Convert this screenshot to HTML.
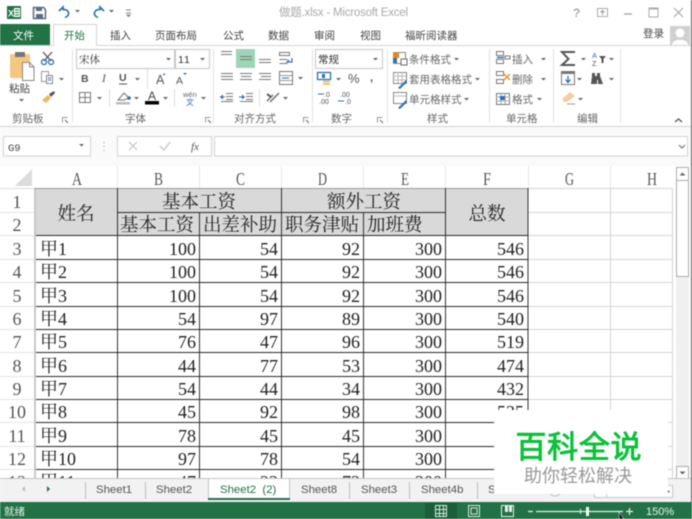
<!DOCTYPE html>
<html><head><meta charset="utf-8"><style>
html,body{margin:0;padding:0;background:#fff;width:692px;height:519px;overflow:hidden}
svg{display:block;filter:blur(.4px)}
.u{font:10.5px "Liberation Sans","Noto Sans CJK SC",sans-serif;fill:#444}
.g{font:10.5px "Liberation Sans","Noto Sans CJK SC",sans-serif;fill:#666}
.c{font:18px "Liberation Serif","Noto Serif CJK SC",serif;fill:#222}
.h{font:18px "Liberation Serif","Noto Serif CJK SC",serif;fill:#555}
.r{text-anchor:end}.m{text-anchor:middle}
.s{font:11.4px "Liberation Sans",sans-serif;fill:#555}
.st{fill:none;stroke:#666;stroke-width:1}
</style></head><body>
<svg xmlns="http://www.w3.org/2000/svg" width="692" height="519" viewBox="0 0 692 519">
<defs><path id="dd" d="M0 0h5l-2.500 2.500z" fill="#666"/></defs>
<rect width="692" height="519" fill="#fff"/>
<!-- title bar -->
<rect x="7" y="6" width="14" height="13" fill="#1e7145"/><rect x="14" y="8" width="6" height="9" fill="#fff"/><path d="M15 10h4M15 12.500h4M15 15h4" stroke="#1e7145"/>
<text x="8" y="16.500" font-family="Liberation Sans" font-weight="bold" font-size="9" fill="#fff">X</text>
<path d="M33.500 7.500h10l2 2v9h-12z" fill="none" stroke="#5b6b84" stroke-width="1.500"/><rect x="36" y="7" width="6" height="4" fill="#5b6b84"/><rect x="36" y="14" width="7" height="4" fill="#5b6b84"/>
<path d="M59 11l4-4v2.500c6-.5 8 6 2 8" fill="none" stroke="#2b6fb5" stroke-width="1.700"/><use href="#dd" x="75" y="10"/>
<path d="M104 11l-4-4v2.500c-6-.5-8 6-2 8" fill="none" stroke="#2b6fb5" stroke-width="1.700"/><use href="#dd" x="109" y="10"/>
<path d="M126 10h5M126 13h5M127 15l1.500 1.500 1.500-1.500z" stroke="#888" fill="#888"/>
<text x="279" y="16" font-family="Liberation Sans,Noto Sans CJK SC,sans-serif" font-size="11.500" fill="#aaa" textLength="129">做题.xlsx - Microsoft Excel</text>
<text x="573" y="17" font-family="Liberation Sans" font-weight="bold" font-size="12" fill="#aaa">?</text>
<rect x="597.500" y="8.500" width="10" height="8" fill="none" stroke="#aaa"/><path d="M602.500 15v-4M600.500 12.500l2-2 2 2" fill="none" stroke="#999"/>
<path d="M624 14h8" stroke="#aaa" stroke-width="1.500"/>
<rect x="649" y="8" width="9" height="9" fill="none" stroke="#aaa"/><path d="M649 8.500h9" stroke="#aaa" stroke-width="2"/>
<path d="M674 8l9 9M683 8l-9 9" stroke="#aaa" stroke-width="1.200"/>
<!-- tabs -->
<rect x="0" y="24" width="50" height="21" fill="#217346"/>
<text x="13" y="39" class="u" style="fill:#fff">文件</text>
<path d="M53.500 45.500v-21h43v21" fill="#fff" stroke="#d4d4d4"/>
<path d="M0 45.500h53M97 45.500h595" stroke="#d4d4d4"/>
<text x="64" y="39" class="u" style="fill:#217346">开始</text>
<text x="110" y="39" class="u">插入</text><text x="155" y="39" class="u">页面布局</text><text x="223" y="39" class="u">公式</text><text x="268" y="39" class="u">数据</text><text x="314" y="39" class="u">审阅</text><text x="360" y="39" class="u">视图</text><text x="405" y="39" class="u">福昕阅读器</text><text x="643" y="37" class="u">登录</text>
<rect x="670" y="26" width="20" height="19" fill="#d0d0d0"/><circle cx="680" cy="33" r="4.500" fill="#fff"/><path d="M672 45c0-7 16-7 16 0z" fill="#fff"/>
<!-- separators -->
<path d="M72.500 49v74M213.500 49v74M312.500 49v74M387.500 49v74M489.500 49v74M553.500 49v74M620.500 49v74" stroke="#e2e2e2"/>
<path d="M0 126.500h692" stroke="#d4d4d4"/>
<!-- clipboard -->
<rect x="10" y="54" width="20" height="24" rx="1" fill="#f3c77f"/><rect x="15" y="52" width="10" height="5" fill="#777"/>
<path d="M22.500 62.500h7l4.500 4.500v13.500h-11.500z" fill="#fff" stroke="#888"/><path d="M29.500 62.500v4.500h4.500" fill="none" stroke="#888"/>
<text x="9" y="92" class="u">粘贴</text><use href="#dd" x="19" y="99"/>
<path d="M43 52l8 9M52 52l-8 9" stroke="#555" stroke-width="1.300"/><circle cx="44" cy="62" r="2.500" fill="none" stroke="#2b6fb5" stroke-width="1.300"/><circle cx="51" cy="62" r="2.500" fill="none" stroke="#2b6fb5" stroke-width="1.300"/>
<rect x="41.500" y="71.500" width="7" height="10" fill="#fff" stroke="#999"/><rect x="46.500" y="75.500" width="6" height="8" fill="#fff" stroke="#888"/><path d="M48 78h3M48 80h3" stroke="#2b6fb5"/><use href="#dd" x="59" y="78"/>
<path d="M42 100l6-5 3 3-5 5z" fill="#e9b868"/><path d="M49 94l5-3 1 2-4 4z" fill="#555"/>
<!-- font -->
<rect x="76.500" y="49.500" width="98" height="19" fill="#fff" stroke="#c6c6c6"/><rect x="175.500" y="49.500" width="34" height="19" fill="#fff" stroke="#c6c6c6"/>
<text x="79" y="63" font-family="Noto Serif CJK SC,serif" font-size="10.500" fill="#333">宋体</text>
<text x="178" y="63" font-family="Liberation Sans" font-size="10.500" fill="#333" letter-spacing="1">11</text>
<use href="#dd" x="166" y="58"/><use href="#dd" x="200" y="58"/>
<text x="81" y="82" font-family="Liberation Sans" font-weight="bold" font-size="10.500" fill="#555">B</text>
<text x="102" y="82" font-family="Liberation Serif" font-style="italic" font-size="11.500" fill="#555">I</text>
<text x="119" y="81" font-family="Liberation Sans" font-weight="bold" font-size="10.500" fill="#555">U</text><path d="M119 84h8" stroke="#555"/><use href="#dd" x="135" y="78"/>
<path d="M147.500 69v20M109.500 89v18M174.500 89v18" stroke="#ddd"/>
<text x="156" y="84" font-family="Liberation Sans" font-size="12.500" fill="#555">A</text><path d="M164 73l1.500 2h-3z" fill="#2b6fb5"/>
<text x="176" y="84" font-family="Liberation Sans" font-size="10.500" fill="#555">A</text><path d="M183 73h4l-2 2z" fill="#2b6fb5"/>
<rect x="79.500" y="92.500" width="11" height="10" fill="none" stroke="#777"/><path d="M85 92v11M79 97.500h12" stroke="#777"/><use href="#dd" x="97" y="97"/>
<path d="M118 100l6-7 5 5-5 2z" fill="#fff" stroke="#777"/><circle cx="129" cy="98" r="1.800" fill="#2b6fb5"/><rect x="116" y="102" width="14" height="2.500" fill="#bbb"/><use href="#dd" x="134" y="97"/>
<text x="148" y="100" font-family="Liberation Sans" font-size="12" fill="#444">A</text><rect x="145" y="101" width="14" height="3.500" fill="#000"/><use href="#dd" x="163" y="97"/>
<text x="183" y="97" font-family="Liberation Sans" font-size="7.500" fill="#666">wén</text><text x="186" y="105" font-family="Noto Sans CJK SC" font-size="8" fill="#2b6fb5">文</text><use href="#dd" x="201" y="97"/>
<!-- alignment -->
<rect x="236" y="49" width="19" height="19" fill="#9fd5b7"/>
<path d="M221 51.500h11M221 54.500h11M240 56.500h12M240 59.500h12M259 59.500h12M259 62.500h12M221 73.500h12M221 76.500h12M221 79.500h12M240 73.500h12M241 76.500h10M240 79.500h12M259 73.500h12M261 76.500h10M259 79.500h12" stroke="#777" fill="none"/>
<path d="M279.500 52.500h10v3h-10zM279.500 59.500h8M279.500 63.500h8" stroke="#777" fill="none"/><path d="M292 58v4h-5l2-2" fill="none" stroke="#2b6fb5" stroke-width="1.200"/>
<rect x="279.500" y="71.500" width="13" height="13" fill="#fff" stroke="#777"/><path d="M279 75.500h13M279 80.500h13" stroke="#999"/><path d="M282 78h7" stroke="#2b6fb5"/><use href="#dd" x="298" y="77"/>
<path d="M226 93.500h7M226 96.500h7M226 99.500h7M221 101.500h12M220 97h5" stroke="#777" fill="none"/><path d="M220 97l3-2.500v5z" fill="#2b6fb5"/>
<path d="M246 93.500h7M246 96.500h7M246 99.500h7M240 101.500h13" stroke="#777" fill="none"/><path d="M245 97l-3-2.500v5z" fill="#2b6fb5"/><path d="M239 97h4" stroke="#2b6fb5"/>
<path d="M259.500 89v17" stroke="#ddd"/>
<path d="M267 101l6-6M270 102l9-9" stroke="#666" stroke-width="1.300"/><path d="M267 94l4 3" stroke="#555" stroke-width="2"/><use href="#dd" x="283" y="97"/>
<!-- number -->
<rect x="315.500" y="49.500" width="67" height="19" fill="#fff" stroke="#c6c6c6"/><text x="318" y="63" class="u" style="fill:#333">常规</text><use href="#dd" x="373" y="58"/>
<rect x="317.500" y="72.500" width="13" height="7" fill="#fff" stroke="#2b6fb5" stroke-width="1.300"/><rect x="322" y="74" width="3" height="4" fill="#2b6fb5"/><path d="M323 81.500h7M323 84h7" stroke="#e9b050" stroke-width="1.500"/><use href="#dd" x="336" y="78"/>
<text x="348" y="83" font-family="Liberation Sans" font-size="13" fill="#555">%</text><text x="370" y="81" font-family="Liberation Sans" font-weight="bold" font-size="11" fill="#555">,</text>
<text x="324" y="97" font-family="Liberation Sans" font-size="7" fill="#555">.0</text><text x="319" y="104" font-family="Liberation Sans" font-size="7" fill="#555">.00</text><path d="M318 94h6" stroke="#2b6fb5"/>
<text x="340" y="97" font-family="Liberation Sans" font-size="7" fill="#555">.00</text><text x="345" y="104" font-family="Liberation Sans" font-size="7" fill="#555">.0</text><path d="M338 101h6" stroke="#2b6fb5"/>
<!-- styles -->
<rect x="393.500" y="52.500" width="12" height="11" fill="#fff" stroke="#888"/><rect x="393" y="52" width="6" height="6" fill="#e0862e"/><rect x="393" y="58" width="4" height="5" fill="#3a6fb0"/><rect x="401" y="59" width="6" height="6" fill="#fff" stroke="#666"/>
<rect x="393.500" y="72.500" width="13" height="11" fill="#fff" stroke="#888"/><path d="M393 76h13M393 80h13M398 72v11M402 72v11" stroke="#bbb"/><path d="M398 88l8-8 1 2-7 7z" fill="#2b6fb5"/>
<rect x="393.500" y="92.500" width="13" height="11" fill="#fff" stroke="#888"/><path d="M393 96h13" stroke="#bbb"/><path d="M398 108l8-8 1 2-7 7z" fill="#2b6fb5"/>
<text x="409" y="63" class="g">条件格式</text><use href="#dd" x="454" y="58"/>
<text x="409" y="83" class="g">套用表格格式</text><use href="#dd" x="475" y="78"/>
<text x="409" y="103" class="g">单元格样式</text><use href="#dd" x="464" y="98"/>
<!-- cells -->
<path d="M496.500 51.500h7v4h-7zM496.500 59.500h7v4h-7zM505 56h5v3h-5z" fill="#fff" stroke="#777"/><path d="M497 57.500h7" stroke="#2b6fb5" stroke-width="1.500"/>
<path d="M496.500 71.500h7v4h-7zM496.500 79.500h7v4h-7z" fill="#fff" stroke="#777"/><path d="M504 74l6 6M510 74l-6 6" stroke="#e9963a" stroke-width="1.500"/>
<rect x="496.500" y="93.500" width="13" height="11" fill="#fff" stroke="#777"/><path d="M496 97h14M496 101h14M501 93v11M505 93v11" stroke="#aaa"/><rect x="500" y="96" width="5" height="4" fill="#2b6fb5"/>
<text x="512" y="63" class="g">插入</text><use href="#dd" x="541" y="58"/>
<text x="512" y="83" class="g">删除</text><use href="#dd" x="541" y="78"/>
<text x="512" y="103" class="g">格式</text><use href="#dd" x="537" y="98"/>
<!-- editing -->
<path d="M575 52h-13l6.500 7-6.500 6h13" fill="none" stroke="#555" stroke-width="2"/><use href="#dd" x="581" y="58"/>
<text x="592" y="58" font-family="Liberation Sans" font-size="7.500" fill="#2b6fb5">A</text><text x="592" y="66" font-family="Liberation Sans" font-size="7.500" fill="#555">Z</text><path d="M599 56h7l-2.500 3v4h-2v-4z" fill="#555"/><use href="#dd" x="609" y="58"/>
<rect x="561.500" y="71.500" width="13" height="13" fill="#fff" stroke="#777"/><rect x="561" y="71" width="14" height="3" fill="#777"/><path d="M568 76v6M565.500 79.500l2.500 3 2.500-3" fill="none" stroke="#2b6fb5" stroke-width="1.300"/><use href="#dd" x="577" y="78"/>
<path d="M592 73h3v3h2v-3h3v3l3 8h-5v-4h-1v4h-6l1-8z" fill="#555"/><use href="#dd" x="609" y="78"/>
<path d="M562 99l8-7 5 4-8 6h-3z" fill="#f2cfa0"/><path d="M567 104h8" stroke="#999"/><use href="#dd" x="578" y="98"/>
<!-- group labels -->
<text x="12" y="122" class="g">剪贴板</text><text x="125" y="122" class="g">字体</text><text x="234" y="122" class="g">对齐方式</text><text x="331" y="122" class="g">数字</text><text x="427" y="122" class="g">样式</text><text x="506" y="122" class="g">单元格</text><text x="577" y="122" class="g">编辑</text>
<path d="M62.500 122.500v-5h5M205.500 122.500v-5h5M303.500 122.500v-5h5M377.500 122.500v-5h5" fill="none" stroke="#999"/><path d="M65 120l3 3M208 120l3 3M306 120l3 3M380 120l3 3" stroke="#666"/>
<path d="M675 122l3.500-3 3.500 3" fill="none" stroke="#555" stroke-width="1.300"/>
<!-- formula bar -->
<rect x="0" y="127" width="692" height="39" fill="#fafafa"/>
<rect x="3.500" y="136.500" width="87" height="19.500" fill="#fff" stroke="#d4d4d4"/><text x="8" y="151" font-family="Liberation Mono" font-size="10.500" fill="#444">G9</text><use href="#dd" x="79" y="144"/>
<path d="M104 142v1M104 146v1M104 150v1" stroke="#999"/>
<rect x="117.500" y="136.500" width="94" height="19.500" fill="#fff" stroke="#d4d4d4"/><rect x="214.500" y="136.500" width="473" height="19.500" fill="#fff" stroke="#d4d4d4"/>
<path d="M129 142l8 8M137 142l-8 8" stroke="#ccc" stroke-width="1.300"/><path d="M160 146l4 4 6-8" fill="none" stroke="#ccc" stroke-width="1.500"/>
<text x="191" y="150" font-family="Liberation Serif" font-style="italic" font-size="11" fill="#555">fx</text>
<path d="M679 145l3 3 3-3" fill="none" stroke="#777" stroke-width="1.200"/>
<!-- column and row headers -->
<rect x="0" y="166" width="673" height="23" fill="#fff"/>
<path d="M32 169v17h-17z" fill="#dcdcdc"/>
<path d="M117.500 166v22M199.500 166v22M281.500 166v22M363.500 166v22M445.500 166v22M528.500 166v22M610.500 166v22" stroke="#e6e6e6"/>
<path d="M0 188.500h35" stroke="#ddd"/>
<text x="72" y="185" class="h" textLength="10" lengthAdjust="spacingAndGlyphs">A</text><text x="154" y="185" class="h" textLength="9" lengthAdjust="spacingAndGlyphs">B</text><text x="236" y="185" class="h" textLength="9" lengthAdjust="spacingAndGlyphs">C</text><text x="318" y="185" class="h" textLength="9" lengthAdjust="spacingAndGlyphs">D</text><text x="401" y="185" class="h" textLength="8" lengthAdjust="spacingAndGlyphs">E</text><text x="483" y="185" class="h" textLength="8" lengthAdjust="spacingAndGlyphs">F</text><text x="565" y="185" class="h" textLength="9" lengthAdjust="spacingAndGlyphs">G</text><text x="647" y="185" class="h" textLength="10" lengthAdjust="spacingAndGlyphs">H</text>
<path d="M0 212.500h35M0 235.500h35M0 259.500h35M0 282.500h35M0 306.500h35M0 329.500h35M0 352.500h35M0 376.500h35M0 399.500h35M0 422.500h35M0 446.500h35M0 469.500h35" stroke="#e4e4e4"/>
<g>
<text x="17" y="208" class="h m">1</text><text x="17" y="231" class="h m">2</text><text x="17" y="255" class="h m">3</text><text x="17" y="278" class="h m">4</text><text x="17" y="302" class="h m">5</text><text x="17" y="325" class="h m">6</text><text x="17" y="348" class="h m">7</text><text x="17" y="372" class="h m">8</text><text x="17" y="395" class="h m">9</text><text x="17" y="418" class="h m">10</text><text x="17" y="442" class="h m">11</text><text x="17" y="465" class="h m">12</text><text x="17" y="488" class="h m">13</text>
</g>
<!-- sheet -->
<rect x="36" y="189" width="492" height="47" fill="#d9d9d9"/>
<path d="M528.500 212.500h144M528.500 235.500h144M528.500 259.500h144M528.500 282.500h144M528.500 306.500h144M528.500 329.500h144M528.500 352.500h144M528.500 376.500h144M528.500 399.500h144M528.500 422.500h144M528.500 446.500h144M528.500 469.500h144M610.500 189v290M672.500 189v290M528.500 188.500h144" stroke="#d4d4d4"/>
<path d="M34.500 188.500h494" stroke="#999"/>
<path d="M35 189v290" stroke="#c8c8c8" stroke-width="2"/>
<path d="M117.500 188v291M199.500 212v267M281.500 188v291M363.500 212v267M445.500 188v291M528 188v291" stroke="#333"/>
<path d="M117 212.500h329M36 235.500h492M36 259.500h492M36 282.500h492M36 306.500h492M36 329.500h492M36 352.500h492M36 376.500h492M36 399.500h492M36 422.500h492M36 446.500h492M36 469.500h492" stroke="#2a2a2a"/>
<text x="76" y="220" class="c m" style="font-size:18.500px">姓名</text>
<text x="199" y="208" class="c m" style="font-size:18.500px">基本工资</text><text x="364" y="208" class="c m" style="font-size:18.500px">额外工资</text><text x="487" y="220" class="c m" style="font-size:18.500px">总数</text>
<text x="120" y="231" class="c" style="font-size:18.500px">基本工资</text><text x="203" y="231" class="c" style="font-size:18.500px">出差补助</text><text x="285" y="231" class="c" style="font-size:18.500px">职务津贴</text><text x="367" y="231" class="c" style="font-size:18.500px">加班费</text>
<g>
<text x="40" y="255" class="c">甲1</text><text x="196" y="255" class="c r">100</text><text x="278" y="255" class="c r">54</text><text x="360" y="255" class="c r">92</text><text x="442" y="255" class="c r">300</text><text x="524" y="255" class="c r">546</text>
<text x="40" y="278" class="c">甲2</text><text x="196" y="278" class="c r">100</text><text x="278" y="278" class="c r">54</text><text x="360" y="278" class="c r">92</text><text x="442" y="278" class="c r">300</text><text x="524" y="278" class="c r">546</text>
<text x="40" y="302" class="c">甲3</text><text x="196" y="302" class="c r">100</text><text x="278" y="302" class="c r">54</text><text x="360" y="302" class="c r">92</text><text x="442" y="302" class="c r">300</text><text x="524" y="302" class="c r">546</text>
<text x="40" y="325" class="c">甲4</text><text x="196" y="325" class="c r">54</text><text x="278" y="325" class="c r">97</text><text x="360" y="325" class="c r">89</text><text x="442" y="325" class="c r">300</text><text x="524" y="325" class="c r">540</text>
<text x="40" y="348" class="c">甲5</text><text x="196" y="348" class="c r">76</text><text x="278" y="348" class="c r">47</text><text x="360" y="348" class="c r">96</text><text x="442" y="348" class="c r">300</text><text x="524" y="348" class="c r">519</text>
<text x="40" y="372" class="c">甲6</text><text x="196" y="372" class="c r">44</text><text x="278" y="372" class="c r">77</text><text x="360" y="372" class="c r">53</text><text x="442" y="372" class="c r">300</text><text x="524" y="372" class="c r">474</text>
<text x="40" y="395" class="c">甲7</text><text x="196" y="395" class="c r">54</text><text x="278" y="395" class="c r">44</text><text x="360" y="395" class="c r">34</text><text x="442" y="395" class="c r">300</text><text x="524" y="395" class="c r">432</text>
<text x="40" y="418" class="c">甲8</text><text x="196" y="418" class="c r">45</text><text x="278" y="418" class="c r">92</text><text x="360" y="418" class="c r">98</text><text x="442" y="418" class="c r">300</text><text x="524" y="418" class="c r">535</text>
<text x="40" y="442" class="c">甲9</text><text x="196" y="442" class="c r">78</text><text x="278" y="442" class="c r">45</text><text x="360" y="442" class="c r">45</text><text x="442" y="442" class="c r">300</text>
<text x="40" y="465" class="c">甲10</text><text x="196" y="465" class="c r">97</text><text x="278" y="465" class="c r">78</text><text x="360" y="465" class="c r">54</text><text x="442" y="465" class="c r">300</text>
<text x="40" y="488" class="c">甲11</text><text x="196" y="488" class="c r">47</text><text x="278" y="488" class="c r">23</text><text x="360" y="488" class="c r">73</text><text x="442" y="488" class="c r">300</text>
</g>
<!-- scrollbar -->
<rect x="673" y="166" width="19" height="312" fill="#fff"/>
<rect x="676" y="180" width="13" height="287" fill="#f0f0f0"/>
<rect x="676.500" y="167.500" width="12" height="13" fill="#fff" stroke="#ababab"/><path d="M679.500 175.500l3-3 3 3z" fill="#666"/>
<rect x="676.500" y="180.500" width="12" height="96" fill="#fff" stroke="#ababab"/>
<rect x="676.500" y="466.500" width="12" height="12" fill="#fff" stroke="#ababab"/><path d="M679.500 471.500h6l-3 3z" fill="#666"/>
<!-- sheet tabs -->
<rect x="0" y="478" width="692" height="24" fill="#f2f2f2"/>
<path d="M0 478.500h208M290 478.500h402" stroke="#c6c6c6"/>
<path d="M25 486v6l-3-3z" fill="#bbb"/><path d="M47 486v6l3-3z" fill="#1e7145"/>
<path d="M85.500 482v17M145.500 482v17M349.500 482v17M409.500 482v17M477.500 482v17" stroke="#bdbdbd"/>
<rect x="208" y="478" width="82" height="22" fill="#fff"/><path d="M208.500 499v-20.500h81v20.500" fill="none" stroke="#c6c6c6"/><rect x="208" y="498" width="82" height="2" fill="#217346"/>
<text x="96" y="493" class="s">Sheet1</text><text x="156" y="493" class="s">Sheet2</text><text x="220" y="493" class="s" style="fill:#217346" xml:space="preserve">Sheet2  (2)</text><text x="301" y="493" class="s">Sheet8</text><text x="361" y="493" class="s">Sheet3</text><text x="421" y="493" class="s">Sheet4b</text><text x="488" y="493" class="s">S</text>
<!-- status bar -->
<rect x="0" y="502" width="692" height="17" fill="#217346"/>
<text x="4" y="515" class="u" style="fill:#e8f0eb">就绪</text>
<rect x="425" y="503" width="32" height="16" fill="#19603a"/>
<path d="M435.500 505.500h11v11h-11zM439.500 505v12M443.500 505v12M435 509.500h12M435 513.500h12" fill="none" stroke="#d8e6dd"/>
<rect x="468.500" y="505.500" width="11" height="11" fill="none" stroke="#d8e6dd"/><rect x="471" y="508" width="6" height="6" fill="none" stroke="#d8e6dd"/>
<rect x="501.500" y="505.500" width="12" height="11" fill="none" stroke="#e8f0eb"/><rect x="505" y="505" width="3" height="7" fill="#e8f0eb"/><rect x="509" y="505" width="3" height="7" fill="#e8f0eb"/>
<path d="M528 511.500h5M536 511.500h87M626 511.500h7M629.500 508v7" stroke="#e8f0eb" stroke-width="1.200"/>
<rect x="586" y="507" width="3" height="9" fill="#fff"/><path d="M580.500 509v5" stroke="#e8f0eb"/>
<text x="646" y="515" font-family="Liberation Sans" font-size="11" fill="#e8f0eb">150%</text>
<path d="M619 512v7h5z" fill="#111" stroke="#fff" stroke-width=".5"/>
<!-- sheet scroll controls below watermark -->
<circle cx="555" cy="489" r="7" fill="none" stroke="#bbb"/>
<rect x="594.500" y="485.500" width="78" height="12" fill="#fff" stroke="#c6c6c6"/><rect x="606" y="486" width="1" height="11" fill="#ccc"/><path d="M668 490v3l2-1.500z" fill="#666"/>
<!-- watermark -->
<rect x="494" y="410" width="174" height="84" fill="#fff"/>
<text x="578.500" y="458" text-anchor="middle" font-family="Noto Sans CJK SC,sans-serif" font-size="31" fill="#0cc13a" stroke="#0cc13a" stroke-width=".9" textLength="126">百科全说</text>
<text x="578" y="482" text-anchor="middle" font-family="Noto Sans CJK SC,sans-serif" font-size="18" fill="#999">助你轻松解决</text>
<path d="M691.500 0v502" stroke="#555"/>
</svg>
</body></html>
